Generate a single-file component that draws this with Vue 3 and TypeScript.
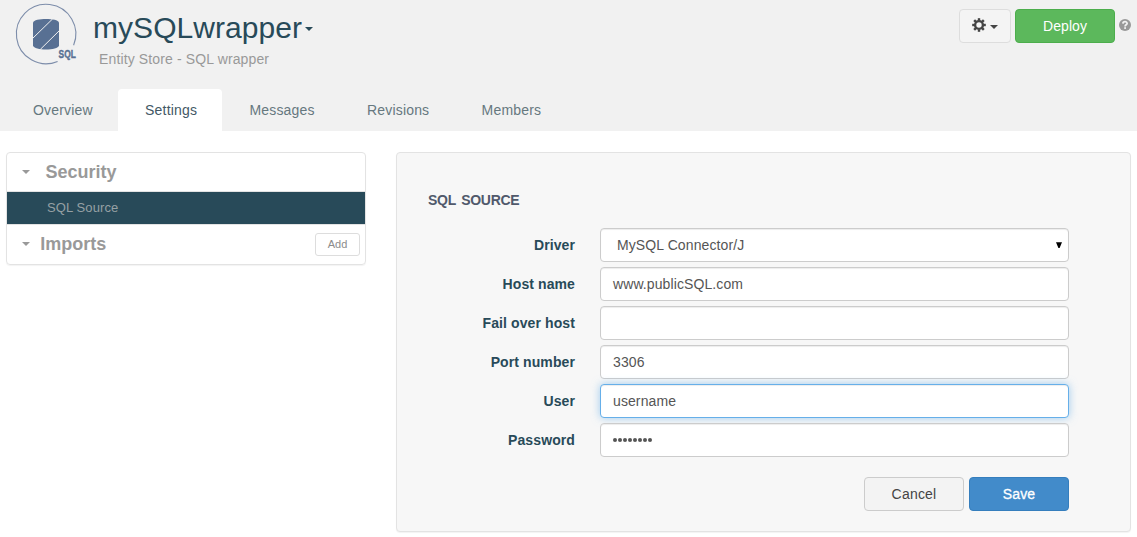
<script setup lang="ts">
import { ref } from 'vue'

interface Field {
  label: string
  value: string
  kind: 'select' | 'text' | 'password'
  focused?: boolean
}

const tabs: string[] = ['Overview', 'Settings', 'Messages', 'Revisions', 'Members']
const activeTab = ref('Settings')

const fields: Field[] = [
  { label: 'Driver', value: 'MySQL Connector/J', kind: 'select' },
  { label: 'Host name', value: 'www.publicSQL.com', kind: 'text' },
  { label: 'Fail over host', value: '', kind: 'text' },
  { label: 'Port number', value: '3306', kind: 'text' },
  { label: 'User', value: 'username', kind: 'text', focused: true },
  { label: 'Password', value: '', kind: 'password' },
]
const passwordLength = 8
const gearAngles: number[] = [0, 45, 90, 135, 180, 225, 270, 315]
</script>

<template>
  <div class="page">
    <header class="header">
      <div class="masthead">
        <svg class="logo" width="68" height="68" viewBox="0 0 68 68">
          <path d="M59.6 43.2 A29.7 29.7 0 1 0 43.6 59.4" fill="none" stroke="#7d8daa" stroke-width="1.1" />
          <path d="M19 20.5 C20 15.9 44 15.9 45 20.5 V43.5 C44 48.8 20 48.8 19 43.5 Z" fill="#587093" />
          <path d="M18.5 36.5 L38.5 17 M26.3 47.4 L45.7 28.3" stroke="#f1f1f1" stroke-width="1" />
          <text x="44.6" y="56" textLength="17.2" lengthAdjust="spacingAndGlyphs" class="logo-text">SQL</text>
        </svg>
        <div class="titles">
          <h1 class="title">mySQLwrapper<i class="caret title-caret"></i></h1>
          <p class="subtitle">Entity Store - SQL wrapper</p>
        </div>
        <div class="actions">
          <button class="gear-button" type="button">
            <svg width="14" height="14" viewBox="0 0 14 14">
              <circle cx="7" cy="7" r="3.9" fill="none" stroke="#444" stroke-width="2.4" />
              <rect
                v-for="a in gearAngles"
                :key="a"
                x="5.8"
                y="0.2"
                width="2.4"
                height="2.4"
                fill="#444"
                :transform="`rotate(${a} 7 7)`"
              />
            </svg>
            <i class="caret gear-caret"></i>
          </button>
          <button class="deploy" type="button">Deploy</button>
          <svg class="help" width="12" height="12" viewBox="0 0 12 12">
            <circle cx="6" cy="6" r="6" fill="#999" />
            <path d="M3.9 4.6 C4 2.1 8.1 2.1 8.1 4.5 C8.1 5.9 6.1 5.8 6.1 7.4" fill="none" stroke="#f1f1f1" stroke-width="1.8" />
            <rect x="5.2" y="8.2" width="1.8" height="1.7" fill="#f1f1f1" />
          </svg>
        </div>
      </div>
      <nav class="tabs">
        <a
          v-for="tab in tabs"
          :key="tab"
          class="tab"
          :class="{ active: tab === activeTab }"
          @click="activeTab = tab"
        >{{ tab }}</a>
      </nav>
    </header>

    <main class="content">
      <aside class="sidebar">
        <div class="group security"><i class="caret"></i><span>Security</span></div>
        <div class="entry">SQL Source</div>
        <div class="group imports">
          <i class="caret"></i><span>Imports</span>
          <button class="add" type="button">Add</button>
        </div>
      </aside>

      <section class="panel">
        <h2 class="heading">SQL SOURCE</h2>
        <div v-for="field in fields" :key="field.label" class="row">
          <label class="label">{{ field.label }}</label>
          <div class="control" :class="[field.kind, { focused: field.focused }]">
            <template v-if="field.kind === 'password'">
              <i v-for="n in passwordLength" :key="n" class="dot"></i>
            </template>
            <span v-else>{{ field.value }}</span>
            <svg v-if="field.kind === 'select'" class="arrow" width="6" height="6" viewBox="0 0 6 6">
              <path d="M0 0.2 H6 L3.6 6 H2.4 Z" fill="#000" />
            </svg>
          </div>
        </div>
        <div class="buttons">
          <button class="cancel" type="button">Cancel</button>
          <button class="save" type="button">Save</button>
        </div>
      </section>
    </main>
  </div>
</template>

<style>
body {
  margin: 0;
  background: #fff;
}
</style>

<style scoped>
.page {
  width: 1137px;
  height: 537px;
  overflow: hidden;
  font-family: "Liberation Sans", Arial, sans-serif;
  font-size: 14px;
  letter-spacing: 0.2px;
}
.page *,
.page {
  box-sizing: border-box;
}
button {
  font: inherit;
  letter-spacing: inherit;
  padding: 0;
  margin: 0;
  border-radius: 4px;
}
.header {
  height: 131px;
  background: #f1f1f1;
}
.masthead {
  display: flex;
  align-items: flex-start;
  height: 89px;
}
.logo {
  margin: 2px 0 0 14px;
  flex: none;
}
.logo-text {
  font-family: "Liberation Sans", Arial, sans-serif;
  font-size: 10.5px;
  font-weight: bold;
  letter-spacing: 0;
  fill: #587093;
  stroke: #587093;
  stroke-width: 0.4px;
}
.titles {
  margin-left: 11px;
}
.title {
  display: flex;
  align-items: center;
  margin: 9px 0 0;
  font-size: 30px;
  line-height: 38px;
  font-weight: normal;
  letter-spacing: 0.05px;
  color: #284a59;
}
.caret {
  display: block;
  flex: none;
  width: 0;
  height: 0;
  border: 4px solid transparent;
  border-top-color: currentColor;
  border-bottom: 0;
}
.title-caret {
  margin: 2px 0 0 3px;
}
.subtitle {
  margin: 4px 0 0 6px;
  line-height: 16px;
  letter-spacing: 0.13px;
  color: #999;
}
.actions {
  display: flex;
  margin: 9px 6px 0 auto;
}
.gear-button {
  display: flex;
  align-items: center;
  width: 52px;
  height: 34px;
  padding: 0 0 0 12px;
  border: 1px solid #ddd;
  background: #f4f4f4;
  color: #444;
}
.gear-button svg {
  margin-top: -2px;
}
.gear-caret {
  margin: 2px 0 0 4px;
}
.deploy {
  width: 100px;
  height: 34px;
  margin-left: 4px;
  border: 1px solid #4cae4c;
  background: #5cb85c;
  color: #fff;
  letter-spacing: 0.05px;
}
.help {
  margin: 10px 0 0 4px;
}
.tabs {
  display: flex;
  height: 42px;
  padding-left: 6px;
}
.tab {
  padding: 0 25.3px 0 27px;
  line-height: 42px;
  letter-spacing: 0.18px;
  color: #66787f;
}
.tab.active {
  border-radius: 4px 4px 0 0;
  background: #fff;
  color: #435866;
}
.content {
  display: flex;
  align-items: flex-start;
  padding: 21px 6px 0;
}
.sidebar {
  width: 360px;
  border: 1px solid #e3e3e3;
  border-radius: 4px;
  box-shadow: 0 1px 1px rgba(0, 0, 0, 0.05);
  color: #999;
}
.group {
  display: flex;
  align-items: center;
  height: 39px;
  padding: 0 5px 0 15px;
  font-size: 18px;
  font-weight: bold;
  letter-spacing: 0;
  border-bottom: 1px solid #e3e3e3;
}
.security span {
  margin-left: 15.5px;
}
.entry {
  height: 32px;
  padding-left: 40px;
  line-height: 31px;
  background: #284a59;
  font-size: 13px;
  letter-spacing: 0.1px;
  color: #96a0a4;
}
.imports {
  height: 40px;
  padding-bottom: 1px;
  border-top: 1px solid #e3e3e3;
  border-bottom: 0;
}
.imports span {
  margin-left: 10.3px;
}
.add {
  width: 45px;
  height: 23px;
  margin-left: auto;
  border: 1px solid #ddd;
  border-radius: 3px;
  background: #fff;
  font-size: 11px;
  font-weight: normal;
  color: #8c8c8c;
}
.panel {
  width: 735px;
  height: 380px;
  margin-left: 30px;
  padding: 39px 61px 0 31px;
  border: 1px solid #e3e3e3;
  border-radius: 4px;
  box-shadow: 0 1px 1px rgba(0, 0, 0, 0.05);
  background: #f7f7f7;
}
.heading {
  margin: 0 0 20px;
  font-size: 14px;
  line-height: 16px;
  letter-spacing: -0.3px;
  word-spacing: 2px;
  color: #50596b;
}
.row {
  display: flex;
  align-items: center;
  height: 34px;
  margin-bottom: 5px;
}
.label {
  width: 147px;
  margin-right: 25px;
  text-align: right;
  font-weight: bold;
  letter-spacing: 0.1px;
  color: #284a59;
}
.control {
  display: flex;
  align-items: center;
  flex: 1;
  height: 34px;
  padding: 0 12px;
  border: 1px solid #ccc;
  border-radius: 4px;
  background: #fff;
  box-shadow: inset 0 1px 1px rgba(0, 0, 0, 0.075);
  letter-spacing: 0.1px;
  color: #555;
}
.control.select {
  padding: 0 6px 0 16px;
}
.control.focused {
  border-color: #66afe9;
  box-shadow: inset 0 1px 1px rgba(0, 0, 0, 0.075), 0 0 8px rgba(102, 175, 233, 0.6);
}
.arrow {
  margin-left: auto;
}
.dot {
  width: 4px;
  height: 4px;
  margin-right: 1px;
  border-radius: 50%;
  background: #555;
}
.buttons {
  display: flex;
  justify-content: flex-end;
  gap: 5px;
  margin-top: 20px;
}
.buttons button {
  width: 100px;
  height: 34px;
}
.cancel {
  border: 1px solid #ccc;
  background: #f3f3f3;
  color: #444;
}
.save {
  border: 1px solid #357ebd;
  background: #428bca;
  color: #fff;
  -webkit-text-stroke: 0.3px #fff;
}
</style>
